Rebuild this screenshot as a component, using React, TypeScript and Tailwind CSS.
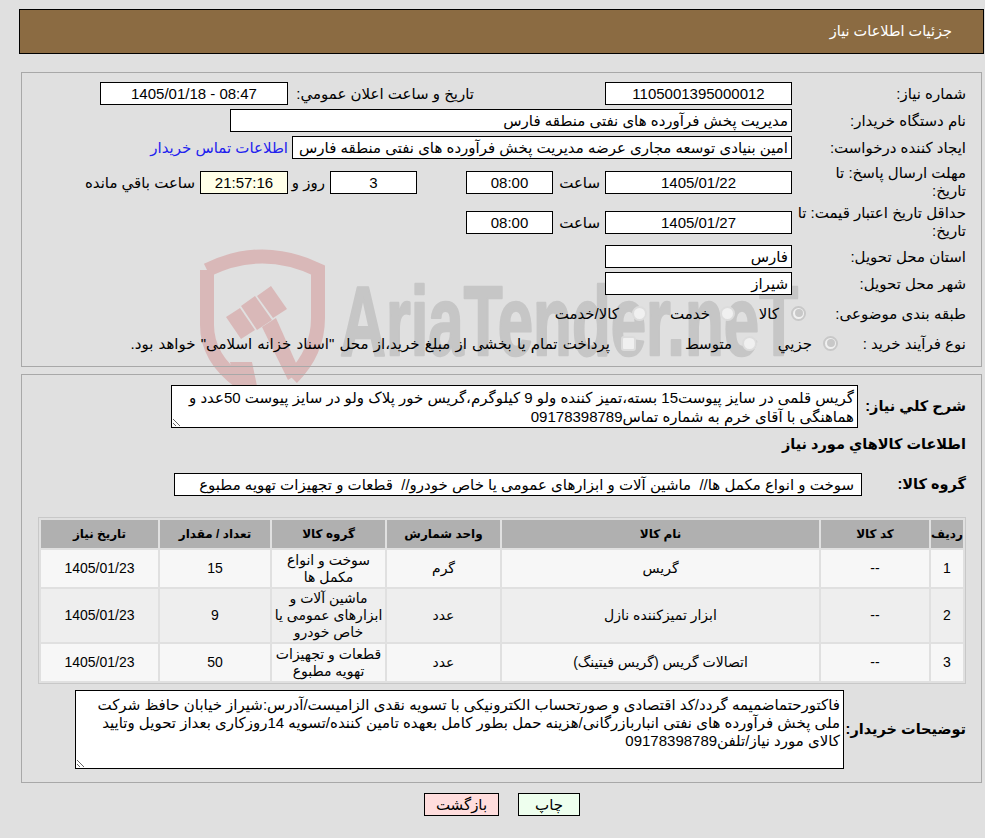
const box = "h-[23px] border border-black flex items-center shrink-0";
const field = box + " bg-white";

function Watermark() {
  return (
    <svg className="absolute left-0 top-0 z-0" width="985" height="420" viewBox="0 0 985 420" direction="ltr">
      <path
        d="M207 270 Q262 243 318 270 V318 Q318 352 292 378 M207 270 V325 Q207 358 240 382"
        fill="none"
        stroke="#d9b8b8"
        strokeWidth="14"
      />
      <polygon points="226,317 240,308 255,330 241,339" fill="#d9b8b8" />
      <polygon points="241,306 255,296 272,320 257,330" fill="#d9b8b8" />
      <polygon points="257,296 271,286 287,309 273,318" fill="#d9b8b8" />
      <polygon points="262,327 276,318 300,372 288,380" fill="#d9b8b8" />
      <polygon points="230,362 252,362 257,386 236,386" fill="#d9b8b8" />
      <text
        x="340"
        y="355"
        dir="ltr"
        fontFamily="'Liberation Sans', sans-serif"
        fontWeight="700"
        fontSize="98"
        textLength="458"
        lengthAdjust="spacingAndGlyphs"
        fill="#c6c6c6"
        stroke="#c6c6c6"
        strokeWidth="2.5"
        strokeLinejoin="round"
      >
        AriaTender.neT
      </text>
    </svg>
  );
}

function Radio({ on }: { on?: boolean }) {
  return (
    <span className={"w-[15px] h-[15px] rounded-full border-2 bg-[#f0f0f0] flex items-center justify-center shrink-0 " + (on ? "border-[#c8c8c8]" : "border-[#dcdcdc]")}>
      {on && <span className="w-[8px] h-[8px] rounded-full bg-[#c8c8c8]" />}
    </span>
  );
}

const rows = [
  { n: "1", name: "گریس", unit: "گرم", group: "سوخت و انواع مکمل ها", qty: "15", date: "1405/01/23", bg: "bg-[#f7f7f7]", h: "h-[37px]" },
  { n: "2", name: "ابزار تمیزکننده نازل", unit: "عدد", group: "ماشین آلات و ابزارهای عمومی یا خاص خودرو", qty: "9", date: "1405/01/23", bg: "bg-[#eeeeee]", h: "h-[53px]" },
  { n: "3", name: "اتصالات گریس (گریس فیتینگ)", unit: "عدد", group: "قطعات و تجهیزات تهویه مطبوع", qty: "50", date: "1405/01/23", bg: "bg-[#f7f7f7]", h: "h-[37px]" },
];

export default function App() {
  return (
    <div
      dir="rtl"
      className="relative min-h-[838px] bg-[#e0e0e0] text-[15px] text-black overflow-hidden pt-[9px] font-['Liberation_Sans','DejaVu_Sans',sans-serif] leading-[17px]"
    >
      <Watermark />
      <div className="relative z-10">
        <div className="h-[45px] ml-[19px] mr-[1px] bg-[#8b6b42] border border-black flex items-center pr-[31px] text-white text-[14.5px]">
          جزئیات اطلاعات نیاز
        </div>

        {/* مشخصات نیاز */}
        <div className="mt-[18px] ml-[21px] mr-[3px] h-[295px] border border-[#a8a8a8] pt-[9px] pr-[15px]">
          <div className="flex items-center h-[23px] mb-[4px]">
            <div className="w-[174px] shrink-0">شماره نیاز:</div>
            <div className={field + " w-[187px] justify-center"}>1105001395000012</div>
            <div className="w-[131px] shrink-0" />
            <div className="w-[186px] shrink-0 whitespace-nowrap">تاریخ و ساعت اعلان عمومي:</div>
            <div dir="ltr" className={field + " w-[188px] justify-center"}>1405/01/18 - 08:47</div>
          </div>
          <div className="flex items-center h-[23px] mb-[4px]">
            <div className="w-[174px] shrink-0">نام دستگاه خریدار:</div>
            <div className={field + " w-[562px] px-[3px]"}>مدیریت پخش فرآورده های نفتی منطقه فارس</div>
          </div>
          <div className="flex items-center h-[23px] mb-[5px]">
            <div className="w-[174px] shrink-0">ایجاد کننده درخواست:</div>
            <div className={field + " w-[500px] px-[3px] whitespace-nowrap overflow-hidden"}>امین بنیادی توسعه مجاری عرضه مدیریت پخش فرآورده های نفتی منطقه فارس</div>
            <div className="mr-[4px] text-[#2222ee] whitespace-nowrap">اطلاعات تماس خریدار</div>
          </div>
          <div className="flex items-center h-[36px] mb-[4px]">
            <div className="w-[174px] shrink-0 leading-[18px]">مهلت ارسال پاسخ: تا<br />تاریخ:</div>
            <div className={field + " w-[187px] justify-center"}>1405/01/22</div>
            <div className="w-[52px] pr-[5px] shrink-0">ساعت</div>
            <div className={field + " w-[87px] justify-center"}>08:00</div>
            <div className="w-[49px] shrink-0" />
            <div className={field + " w-[87px] justify-center"}>3</div>
            <div className="w-[42px] pr-[5px] shrink-0 whitespace-nowrap">روز و</div>
            <div className={box + " w-[88px] justify-center bg-[#ffffe8]"}>21:57:16</div>
            <div className="pr-[5px] whitespace-nowrap">ساعت باقي مانده</div>
          </div>
          <div className="flex items-center h-[36px] mb-[5px]">
            <div className="w-[174px] shrink-0 leading-[18px]">حداقل تاریخ اعتبار قیمت: تا<br />تاریخ:</div>
            <div className={field + " w-[187px] justify-center"}>1405/01/27</div>
            <div className="w-[52px] pr-[5px] shrink-0">ساعت</div>
            <div className={field + " w-[87px] justify-center"}>08:00</div>
          </div>
          <div className="flex items-center h-[23px] mb-[4px]">
            <div className="w-[174px] shrink-0">استان محل تحویل:</div>
            <div className={field + " w-[187px] px-[3px]"}>فارس</div>
          </div>
          <div className="flex items-center h-[23px] mb-[4px]">
            <div className="w-[174px] shrink-0">شهر محل تحویل:</div>
            <div className={field + " w-[187px] px-[3px]"}>شیراز</div>
          </div>
          <div className="flex items-center h-[28px] mb-[2px]">
            <div className="w-[160px] shrink-0">طبقه بندی موضوعی:</div>
            <Radio on />
            <div className="w-[56px] pr-[12px] shrink-0">کالا</div>
            <Radio />
            <div className="w-[73px] pr-[10px] shrink-0">خدمت</div>
            <Radio />
            <div className="pr-[13px]">کالا/خدمت</div>
          </div>
          <div className="flex items-center h-[28px]">
            <div className="w-[128px] shrink-0">نوع فرآیند خرید :</div>
            <Radio on />
            <div className="w-[66px] pr-[11px] shrink-0">جزیي</div>
            <Radio />
            <div className="w-[106px] pr-[10px] shrink-0">متوسط</div>
            <span className="w-[15px] h-[15px] rounded-[3px] border-2 border-[#dcdcdc] bg-[#f0f0f0] shrink-0" />
            <div className="pr-[11px] whitespace-nowrap [word-spacing:1px]">پرداخت تمام یا بخشی از مبلغ خرید،از محل "اسناد خزانه اسلامی" خواهد بود.</div>
          </div>
        </div>

        {/* شرح و اقلام */}
        <div className="mt-[7px] ml-[21px] mr-[3px] h-[409px] border border-[#a8a8a8] pt-[10px] pr-[15px]">
          <div className="flex items-center h-[43px]">
            <div className="w-[108px] shrink-0 font-bold text-[14.5px]">شرح کلي نياز:</div>
            <textarea
              readOnly
              dir="rtl"
              className="w-[687px] h-[43px] bg-white border border-black px-[3px] pt-[2px] pb-0 leading-[19px] outline-none overflow-hidden"
              value={"گریس قلمی در سایز پیوست15 بسته،تمیز کننده ولو 9 کیلوگرم،گریس خور پلاک ولو در سایز پیوست 50عدد و\nهماهنگی با آقای خرم به شماره تماس09178398789"}
            />
          </div>
          <div className="mt-[5px] h-[22px] flex items-center font-bold text-[14.5px]">اطلاعات کالاهاي مورد نياز</div>
          <div className="mt-[18px] flex items-center h-[23px]">
            <div className="w-[104px] shrink-0 font-bold text-[14.5px]">گروه کالا:</div>
            <div className={field + " w-[688px] px-[7px] whitespace-pre overflow-hidden"}>سوخت و انواع مکمل ها//  ماشین آلات و ابزارهای عمومی یا خاص خودرو//  قطعات و تجهیزات تهویه مطبوع</div>
          </div>
          <table className="mt-[21px] w-[928px] table-fixed border-separate border-spacing-[2px] border border-[#c8c8c8] text-center text-[14px]">
            <thead>
              <tr className="h-[28px] bg-[#b0b0b0] text-[12px]">
                <th className="w-[32px] font-bold">ردیف</th>
                <th className="w-[108px] font-bold">کد کالا</th>
                <th className="w-[317px] font-bold">نام کالا</th>
                <th className="w-[113px] font-bold">واحد شمارش</th>
                <th className="w-[113px] font-bold">گروه کالا</th>
                <th className="w-[110px] font-bold">تعداد / مقدار</th>
                <th className="font-bold">تاریخ نیاز</th>
              </tr>
            </thead>
            <tbody>
              {rows.map((r) => (
                <tr key={r.n} className={r.h + " " + r.bg}>
                  <td>{r.n}</td>
                  <td>--</td>
                  <td>{r.name}</td>
                  <td>{r.unit}</td>
                  <td className="px-[2px]">{r.group}</td>
                  <td>{r.qty}</td>
                  <td>{r.date}</td>
                </tr>
              ))}
            </tbody>
          </table>
          <div className="mt-[6px] flex items-center h-[79px]">
            <div className="w-[122px] shrink-0 font-bold whitespace-nowrap text-[14.5px]">توضیحات خریدار:</div>
            <textarea
              readOnly
              dir="rtl"
              className="w-[769px] h-[79px] bg-white border border-black px-[3px] pt-[5px] pb-0 leading-[18px] outline-none overflow-hidden"
              value={"فاکتورحتماضمیمه گردد/کد اقتصادی و صورتحساب الکترونیکی با تسویه نقدی الزامیست/آدرس:شیراز خیابان حافظ شرکت\nملی پخش فرآورده های نفتی انباربازرگانی/هزینه حمل بطور کامل بعهده تامین کننده/تسویه 14روزکاری بعداز تحویل وتایید\nکالای مورد نیاز/تلفن09178398789"}
            />
          </div>
        </div>

        <div className="mt-[10px] flex justify-center gap-[19px] pl-[19px]">
          <div className="w-[62px] h-[23px] bg-[#eeffee] border border-black flex items-center justify-center">چاپ</div>
          <div className="w-[75px] h-[23px] bg-[#ffdddd] border border-black flex items-center justify-center">بازگشت</div>
        </div>
      </div>
    </div>
  );
}
